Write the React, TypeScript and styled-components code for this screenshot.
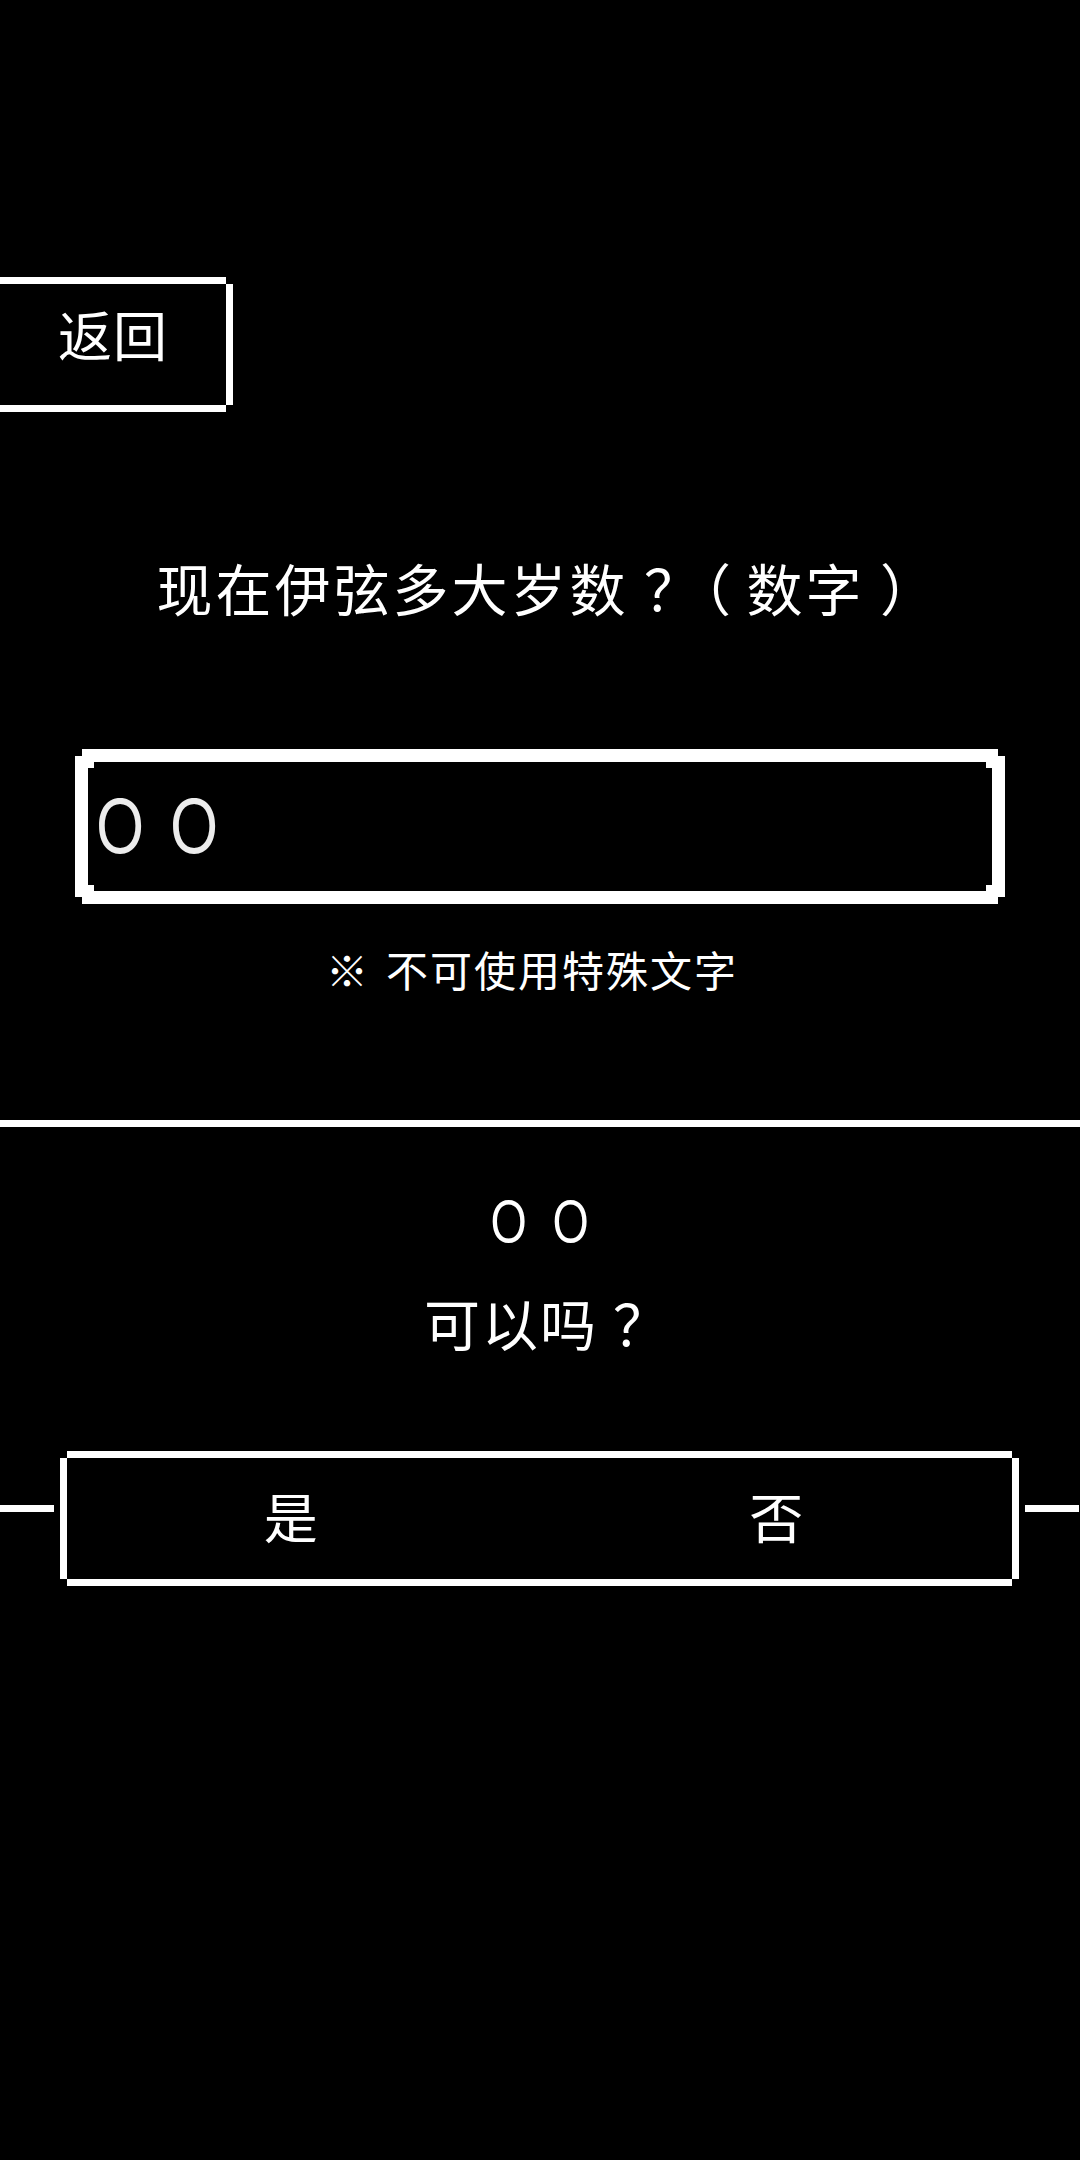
import React from "react";
import styled, { createGlobalStyle } from "styled-components";

const Global = createGlobalStyle`
  html, body {
    margin: 0;
    padding: 0;
    background: #000;
  }
  body {
    font-family: "Noto Sans CJK SC", "Noto Sans", sans-serif;
    color: #fff;
  }
  #root {
    min-height: 2160px;
    background: #000;
  }
`;

const cut = (n: number) => `polygon(
  0 ${n}px, ${n}px ${n}px, ${n}px 0,
  calc(100% - ${n}px) 0, calc(100% - ${n}px) ${n}px, 100% ${n}px,
  100% calc(100% - ${n}px), calc(100% - ${n}px) calc(100% - ${n}px), calc(100% - ${n}px) 100%,
  ${n}px 100%, ${n}px calc(100% - ${n}px), 0 calc(100% - ${n}px)
)`;

const Page = styled.main`
  width: 1080px;
  min-height: 2160px;
  display: flex;
  flex-direction: column;
  background: #000;
  color: #fff;
  font-family: "Noto Sans CJK SC", "Noto Sans", sans-serif;
`;

const BackButton = styled.button`
  margin-top: 277px;
  width: 233px;
  height: 135px;
  box-sizing: border-box;
  border: 7px solid #fff;
  border-left: none;
  background: #000;
  color: #fff;
  font-family: inherit;
  font-size: 54px;
  line-height: 1;
  letter-spacing: 1px;
  padding: 0 0 22px 0;
  display: flex;
  align-items: center;
  justify-content: center;
  clip-path: polygon(
    0 0, calc(100% - 7px) 0, calc(100% - 7px) 7px, 100% 7px,
    100% calc(100% - 7px), calc(100% - 7px) calc(100% - 7px), calc(100% - 7px) 100%,
    0 100%
  );
  cursor: pointer;
`;

const Question = styled.h1`
  margin: 147px 0 0 0;
  font-size: 56px;
  font-weight: 400;
  line-height: 1;
  letter-spacing: 3px;
  text-align: center;
`;

/* punctuation centred in a full-width cell, as the pixel font draws it */
const Punct = styled.span<{ $gap: number }>`
  display: inline-block;
  width: calc(1em + ${(p) => p.$gap}px);
  text-align: center;
  letter-spacing: 0;
  font-feature-settings: "halt" 1;
`;

const InputBox = styled.div`
  margin: 134px auto 0 auto;
  width: 930px;
  height: 155px;
  box-sizing: border-box;
  border: 13px solid #fff;
  clip-path: ${cut(7)};
  background:
    linear-gradient(#fff, #fff) left top / 6px 6px no-repeat,
    linear-gradient(#fff, #fff) right top / 6px 6px no-repeat,
    linear-gradient(#fff, #fff) left bottom / 6px 6px no-repeat,
    linear-gradient(#fff, #fff) right bottom / 6px 6px no-repeat,
    #000;
  background-origin: padding-box;
  background-clip: padding-box;
  display: flex;
  align-items: center;
  padding: 0 0 12px 0;
`;

const InputText = styled.span`
  margin-left: -5px;
  font-size: 74px;
  line-height: 1;
  color: #ececec;
  letter-spacing: 0;
`;

const Glyph = styled.span`
  display: inline-block;
  transform: scaleX(0.8);
`;

const Note = styled.p`
  margin: 44px 0 0 0;
  padding-right: 16px;
  font-size: 42px;
  line-height: 1;
  letter-spacing: 2px;
  text-align: center;
`;

const Mark = styled.span`
  margin-right: 16px;
`;

const Divider = styled.hr`
  margin: 130px 0 0 0;
  height: 7px;
  border: none;
  background: #fff;
`;

const Echo = styled.p`
  margin: 63px 0 0 0;
  font-size: 56px;
  line-height: 1;
  letter-spacing: 6px;
  text-align: center;
  padding-left: 4px;
`;

const Confirm = styled.p`
  margin: 48px 0 0 0;
  font-size: 56px;
  line-height: 1;
  letter-spacing: 2px;
  text-align: center;
`;

const ChoiceRow = styled.div`
  margin-top: 101px;
  display: grid;
  grid-template-columns: 54px 1fr 54px;
  column-gap: 6px;
  padding-right: 1px;
`;

const SideLine = styled.div`
  margin-top: 54px;
  height: 7px;
  background: #fff;
  align-self: start;
`;

const ChoiceBox = styled.div`
  height: 135px;
  box-sizing: border-box;
  border: 7px solid #fff;
  clip-path: ${cut(7)};
  display: flex;
`;

const Choice = styled.button<{ $shift?: number }>`
  flex: 1;
  background: transparent;
  border: none;
  color: #fff;
  font-family: inherit;
  font-size: 54px;
  line-height: 1;
  padding: 0 ${(p) => p.$shift ?? 0}px 6px 0;
  display: flex;
  align-items: center;
  justify-content: center;
  cursor: pointer;
`;

const OO = () => (
  <>
    <Glyph>Ｏ</Glyph>
    <Glyph>Ｏ</Glyph>
  </>
);

export default function App() {
  return (
    <>
      <Global />
      <Page>
        <BackButton>返回</BackButton>
        <Question>
          现在伊弦多大岁数<Punct $gap={3}>？</Punct>
          <Punct $gap={3}>（</Punct>数字<Punct $gap={3}>）</Punct>
        </Question>
        <InputBox>
          <InputText>
            <OO />
          </InputText>
        </InputBox>
        <Note>
          <Mark>※</Mark>不可使用特殊文字
        </Note>
        <Divider />
        <Echo>
          <OO />
        </Echo>
        <Confirm>
          可以吗<Punct $gap={2}>？</Punct>
        </Confirm>
        <ChoiceRow>
          <SideLine />
          <ChoiceBox>
            <Choice $shift={38}>是</Choice>
            <Choice $shift={12}>否</Choice>
          </ChoiceBox>
          <SideLine />
        </ChoiceRow>
      </Page>
    </>
  );
}
